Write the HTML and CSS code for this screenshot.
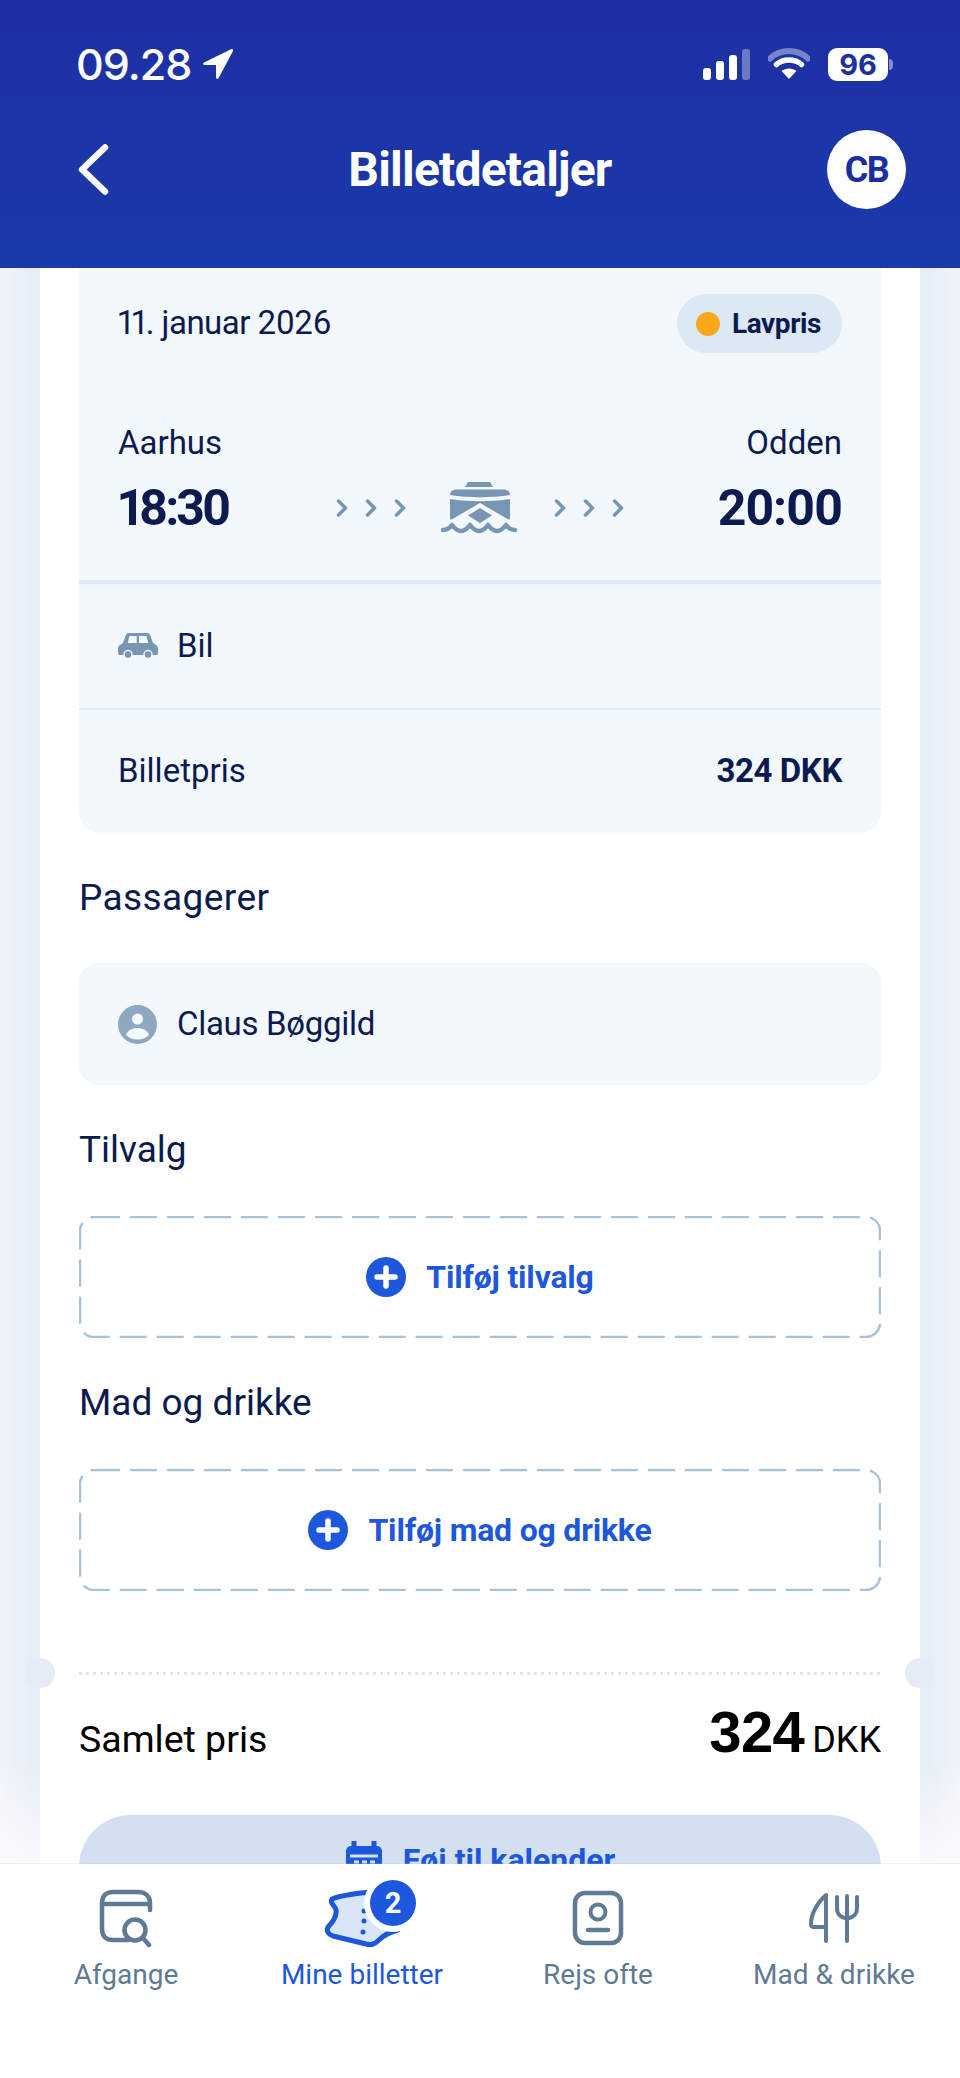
FILE: index.html
```html
<!DOCTYPE html>
<html lang="da">
<head>
<meta charset="utf-8">
<title>Billetdetaljer</title>
<link rel="stylesheet" href="styles.css">
</head>
<body>
<div class="app">
  <header class="top">
    <div class="status">
      <div class="status-left">
        <span class="clock">09.28</span>
        <svg class="loc" viewBox="0 0 32 32"><path d="M29.500 1 2 14.500C.5 15.300 1 17 2.500 17H14v12.500c0 1.600 1.900 2 2.600.6L31 3c.6-1.300-.3-2.500-1.500-2Z" fill="#fff"/></svg>
      </div>
      <div class="status-right">
        <div class="signal"><i class="b1"></i><i class="b2"></i><i class="b3"></i><i class="b4"></i></div>
        <svg class="wifi" viewBox="0 0 42 32"><path d="M2 10.500C12.500 .5 29.500 .5 40 10.500" fill="none" stroke="#fff" stroke-opacity=".4" stroke-width="6" stroke-linecap="round"/><path d="M8.500 16.500C15 10.500 27 10.500 33.500 16.500" fill="none" stroke="#fff" stroke-width="5.500" stroke-linecap="round"/><path d="M21 31 13.500 23c4-3.500 11-3.500 15 0Z" fill="#fff"/></svg>
        <div class="battery"><span>96</span></div>
      </div>
    </div>
    <div class="nav">
      <svg class="back" viewBox="0 0 31 51"><path d="M27 3.500 4 25.500 27 47.500" fill="none" stroke="#fff" stroke-width="6.500" stroke-linecap="round" stroke-linejoin="round"/></svg>
      <h1 class="title">Billetdetaljer</h1>
      <div class="avatar">CB</div>
    </div>
  </header>

  <main class="scroll">
    <div class="card">
      <section class="panel">
        <div class="panel-head">
          <div class="date-row">
            <span class="date">11. januar 2026</span>
            <span class="pill"><i class="dot"></i>Lavpris</span>
          </div>
          <div class="route">
            <div class="stop">
              <span class="city">Aarhus</span>
              <span class="time time-start">18:30</span>
            </div>
            <div class="voyage">
              <svg class="chev" viewBox="0 0 12 18"><path d="M2.500 2 9.500 9 2.500 16" /></svg>
              <svg class="chev" viewBox="0 0 12 18"><path d="M2.500 2 9.500 9 2.500 16" /></svg>
              <svg class="chev" viewBox="0 0 12 18"><path d="M2.500 2 9.500 9 2.500 16" /></svg>
              <svg class="ferry" viewBox="0 0 80 52"><path d="M28 0h22l3 5H25ZM10 13c0-3 2-5 5-5.500h50c3 .5 5 2.500 5 5.500-18 3-42 3-60 0ZM10 17c18 3 42 3 60 0v19c0 1.500-1 2-2.500 1L40 21 12.500 37C11 38 10 37.500 10 36ZM40 26l12 7.500-12 7.500-12-7.500Z" fill="#7895B3"/><path d="M3 48c4 0 6-1 9-5 3 4 5 6 9 6s6-2 9-6c3 4 5 6 9 6s6-2 9-6c3 4 5 6 9 6s6-2 9-6c3 4 5 5 9 5" fill="none" stroke="#7895B3" stroke-width="4.500" stroke-linecap="round" stroke-linejoin="round"/></svg>
              <svg class="chev" viewBox="0 0 12 18"><path d="M2.500 2 9.500 9 2.500 16" /></svg>
              <svg class="chev" viewBox="0 0 12 18"><path d="M2.500 2 9.500 9 2.500 16" /></svg>
              <svg class="chev" viewBox="0 0 12 18"><path d="M2.500 2 9.500 9 2.500 16" /></svg>
            </div>
            <div class="stop stop-end">
              <span class="city">Odden</span>
              <span class="time">20:00</span>
            </div>
          </div>
        </div>
        <div class="row row-first">
          <svg class="car" viewBox="0 0 40 26"><path fill-rule="evenodd" d="M11 0h18c2 0 3 1 3.500 3L35 10l3 2c1.500 1 2 2 2 4v4c0 1.500-1 2-2 2H2c-1 0-2-.5-2-2v-4c0-2 .5-3 2-4l3-2L7.500 3C8 1 9.500 0 11 0ZM11.500 3 9.700 10h9V3ZM21 3v7h9.300L28.500 3Z" fill="#7895B3"/><circle cx="10" cy="21.500" r="4" fill="#7895B3" stroke="#F3F8FD" stroke-width="1.500"/><circle cx="30" cy="21.500" r="4" fill="#7895B3" stroke="#F3F8FD" stroke-width="1.500"/></svg>
          <span class="row-text">Bil</span>
        </div>
        <div class="row row-price">
          <span class="row-text">Billetpris</span>
          <strong class="price">324 DKK</strong>
        </div>
      </section>

      <h2 class="heading heading-wide">Passagerer</h2>
      <section class="panel passenger">
        <svg class="person" viewBox="0 0 39 39"><circle cx="19.500" cy="19.500" r="19.500" fill="#8FA8C2"/><circle cx="19.500" cy="14" r="5.500" fill="#F3F8FD"/><path d="M8 30c2-5 6-7 11.500-7S29 25 31 30c-3 3-7 4.500-11.500 4.500S11 33 8 30Z" fill="#F3F8FD"/></svg>
        <span class="row-text">Claus Bøggild</span>
      </section>

      <h2 class="heading heading-b">Tilvalg</h2>
      <button class="add" type="button">
        <svg class="dash" viewBox="0 0 802 122" preserveAspectRatio="none"><rect x="1" y="1" width="800" height="120" rx="14" /></svg>
        <svg class="plus" viewBox="0 0 40 40"><circle cx="20" cy="20" r="20" fill="#1D57DB"/><path d="M20 11v18M11 20h18" stroke="#fff" stroke-width="5.500" stroke-linecap="round"/></svg>
        <span>Tilføj tilvalg</span>
      </button>

      <h2 class="heading heading-b">Mad og drikke</h2>
      <button class="add" type="button">
        <svg class="dash" viewBox="0 0 802 122" preserveAspectRatio="none"><rect x="1" y="1" width="800" height="120" rx="14" /></svg>
        <svg class="plus" viewBox="0 0 40 40"><circle cx="20" cy="20" r="20" fill="#1D57DB"/><path d="M20 11v18M11 20h18" stroke="#fff" stroke-width="5.500" stroke-linecap="round"/></svg>
        <span>Tilføj mad og drikke</span>
      </button>

      <div class="tear"></div>
      <div class="total">
        <span class="total-label">Samlet pris</span>
        <span class="total-value"><b>324</b> <span class="cur">DKK</span></span>
      </div>
      <button class="calendar" type="button">
        <svg class="cal" viewBox="0 0 38 38"><path d="M9 1v8M29 1v8" stroke="#1D57DB" stroke-width="5" stroke-linecap="round"/><path d="M6 5h26a5 5 0 0 1 5 5v23a5 5 0 0 1-5 5H6a5 5 0 0 1-5-5V10a5 5 0 0 1 5-5Z" fill="#1D57DB"/><path d="M5 15h28" stroke="#D3E0EF" stroke-width="3"/><path d="M9 21h5M17 21h5M25 21h5" stroke="#D3E0EF" stroke-width="3"/></svg>
        <span>Føj til kalender</span>
      </button>
    </div>
    <div class="fade"></div>
  </main>

  <nav class="tabs">
    <a class="tab">
      <span class="tab-icon">
        <svg class="ic-afgange" viewBox="0 0 56 60"><path d="M30 52H15C8 52 4 48 4 41V15C4 8 8 4 15 4h25c7 0 12 4 12 11v7M4 16h47" fill="none" stroke="#5F7A95" stroke-width="4.500" stroke-linecap="round"/><circle cx="37" cy="42" r="10.500" fill="none" stroke="#5F7A95" stroke-width="4.500"/><path d="M45 50l6 7" stroke="#5F7A95" stroke-width="4.500" stroke-linecap="round"/></svg>
      </span>
      <span class="tab-label">Afgange</span>
    </a>
    <a class="tab tab-on">
      <span class="tab-icon">
        <svg class="ic-ticket" viewBox="0 0 76 60"><path d="M8 11C18 7 30 5 60 3L74 42C66 44 60 47 55 52 50 57 47 57 42 56L9 48C4 46 2 43 4 39 8 35 13 29 12 22 11 17 5 15 8 11Z" fill="#D9E6F6" stroke="#1D57DB" stroke-width="5" stroke-linejoin="round"/><circle cx="40" cy="23" r="2.500" fill="#1D57DB"/><circle cx="40" cy="33" r="2.500" fill="#1D57DB"/><circle cx="39" cy="44" r="2.500" fill="#1D57DB"/></svg>
        <span class="badge">2</span>
      </span>
      <span class="tab-label">Mine billetter</span>
    </a>
    <a class="tab">
      <span class="tab-icon">
        <svg class="ic-rejs" viewBox="0 0 52 56"><rect x="3" y="3" width="46" height="50" rx="10" fill="none" stroke="#5F7A95" stroke-width="4.500"/><circle cx="26" cy="22" r="7.500" fill="none" stroke="#5F7A95" stroke-width="4"/><path d="M16 40h20" stroke="#5F7A95" stroke-width="4.500" stroke-linecap="round"/></svg>
      </span>
      <span class="tab-label">Rejs ofte</span>
    </a>
    <a class="tab">
      <span class="tab-icon">
        <svg class="ic-mad" viewBox="0 0 52 52"><path d="M18 49V3C9 11 3 22 3 32c0 2 1 3 3 3h12" fill="none" stroke="#5F7A95" stroke-width="4" stroke-linecap="round" stroke-linejoin="round"/><path d="M39 49V4M29 5v11c0 6 4 10 10 10s10-4 10-10V5" fill="none" stroke="#5F7A95" stroke-width="4" stroke-linecap="round"/></svg>
      </span>
      <span class="tab-label">Mad &amp; drikke</span>
    </a>
  </nav>
</div>
</body>
</html>
```

FILE: styles.css
```css
* { box-sizing: border-box; }
html, body { margin: 0; padding: 0; }
body { font-family: Roboto, "Liberation Sans", sans-serif; font-feature-settings: "pnum"; color: #0B1B50; background: #fff; }
h1, h2 { margin: 0; font-weight: 400; }
i { display: block; }

.app { width: 960px; height: 2078px; display: flex; flex-direction: column; overflow: hidden; }

/* header */
.top { height: 268px; flex: none; background: linear-gradient(#1E2FA3, #1A3AA9); color: #fff; padding: 47px 54px 0 76px; }
.status { display: flex; justify-content: space-between; align-items: center; height: 34px; }
.status-left { display: flex; align-items: center; gap: 11px; }
.clock { font-family: Inter, Roboto, sans-serif; font-size: 43px; font-weight: 500; letter-spacing: -1px; line-height: 34px; }
.loc { width: 32px; height: 32px; }
.status-right { display: flex; align-items: center; }
.signal { display: flex; align-items: flex-end; gap: 5px; height: 31px; }
.signal i { width: 8px; background: #fff; border-radius: 3px; }
.signal .b1 { height: 12px; }
.signal .b2 { height: 19px; }
.signal .b3 { height: 25px; }
.signal .b4 { height: 31px; opacity: .35; }
.wifi { width: 42px; height: 32px; margin: 0 18px; }
.battery { position: relative; width: 60px; height: 33px; border-radius: 9px; background: #fff; color: #1B2F9F; font-family: Inter, sans-serif; font-size: 29px; font-weight: 700; line-height: 33px; text-align: center; margin-right: 18px; }
.battery::after { content: ""; position: absolute; right: -5px; top: 11px; width: 4px; height: 11px; border-radius: 0 4px 4px 0; background: rgba(255,255,255,.45); }

.nav { display: flex; align-items: center; justify-content: space-between; height: 79px; margin-top: 49px; position: relative; padding-left: 2px; }
.back { width: 31px; height: 51px; }
.title { position: absolute; left: 0; right: 22px; text-align: center; font-size: 48px; font-weight: 700; line-height: 60px; letter-spacing: -.8px; }
.avatar { width: 79px; height: 79px; border-radius: 50%; background: #fff; color: #1B2F9F; font-size: 36px; font-weight: 700; letter-spacing: -1.500px; display: flex; align-items: center; justify-content: center; }

/* scroll area */
.scroll { flex: 1; min-height: 0; position: relative; overflow: hidden; background: linear-gradient(90deg, #F0F4FA 0, #E8EEF7 30px, #E8EEF7 930px, #F0F4FA 100%); padding: 0 40px; }
.card { background: #fff; padding: 0 39px; height: 1720px; }
.fade { position: absolute; left: 0; right: 0; bottom: 0; height: 100px; background: linear-gradient(rgba(255,255,255,0), rgba(255,255,255,.7)); }

.panel { background: #F3F8FD; border-radius: 0 0 20px 20px; }
.panel-head { padding: 26px 39px 42px; border-bottom: 4px solid #DDE9F5; }
.date-row { display: flex; justify-content: space-between; align-items: center; height: 59px; }
.date { font-size: 33px; letter-spacing: -.5px; padding-bottom: 2px; }
.pill { display: flex; align-items: center; gap: 12px; height: 59px; padding: 0 21px 0 19px; border-radius: 30px; background: #DCE8F4; font-size: 28px; font-weight: 700; letter-spacing: -.4px; }
.dot { width: 24px; height: 24px; border-radius: 50%; background: #FBA71B; }

.route { display: grid; grid-template-columns: 1fr auto 1fr; margin-top: 68px; }
.stop { display: flex; flex-direction: column; }
.stop-end { align-items: flex-end; }
.city { font-size: 33px; line-height: 44px; }
.time { font-size: 50px; font-weight: 700; line-height: 60px; margin-top: 13px; letter-spacing: -1.500px; }
.time-start { letter-spacing: -3.200px; }
.voyage { display: flex; align-items: center; gap: 17px; padding-top: 57px; }
.chev { width: 12px; height: 18px; fill: none; stroke: #7895B3; stroke-width: 3.500; stroke-linecap: round; stroke-linejoin: round; }
.ferry { width: 80px; height: 52px; margin: 0 17px; }

.row { display: flex; align-items: center; padding: 0 39px; }
.row-first { height: 126px; gap: 19px; border-bottom: 2px solid #DDE9F5; }
.row-price { height: 123px; justify-content: space-between; }
.row-text { font-size: 33px; padding-bottom: 2px; }
.car { width: 40px; height: 26px; }
.price { font-size: 33px; font-weight: 700; letter-spacing: -.4px; padding-bottom: 2px; }

.heading { display: flex; align-items: center; height: 130px; padding-bottom: 2px; font-size: 37px; }
.heading-wide { letter-spacing: .4px; }
.heading-b { height: 131px; }
.passenger { height: 122px; border-radius: 20px; display: flex; align-items: center; gap: 20px; padding: 0 39px; }
.passenger .row-text { letter-spacing: -.3px; }
.person { width: 39px; height: 39px; }

.add { position: relative; display: flex; align-items: center; justify-content: center; gap: 20px; width: 100%; height: 122px; border: 0; padding: 0; background: none; font-family: inherit; font-size: 32px; font-weight: 700; letter-spacing: -.2px; color: #1D57DB; }
.dash { position: absolute; inset: 0; width: 100%; height: 100%; fill: none; stroke: #A9C2DC; stroke-width: 2.500; stroke-dasharray: 25 12; stroke-linecap: round; }
.plus { width: 40px; height: 40px; position: relative; }
.add span { position: relative; }

.tear { position: relative; height: 3px; margin-top: 81px; background: radial-gradient(circle at 1.500px 1.500px, #DDE5EE 1.500px, transparent 2px) 0 0 / 7px 3px repeat-x; }
.tear::before, .tear::after { content: ""; position: absolute; top: -14px; width: 30px; height: 30px; border-radius: 50%; background: #E6ECF5; }
.tear::before { left: -54px; }
.tear::after { right: -54px; }

.total { display: flex; justify-content: space-between; align-items: baseline; height: 126px; padding-top: 23px; margin-bottom: 14px; }
.total-label { font-size: 37.500px; color: #000; }
.total-value { color: #000; }
.total-value b { font-family: "Liberation Sans", sans-serif; font-size: 58px; letter-spacing: -.6px; margin-right: 2px; }
.cur { font-size: 36px; margin-left: 2px; }

.calendar { position: relative; z-index: 1; display: flex; align-items: center; justify-content: center; gap: 20px; width: 100%; height: 104px; border: 0; border-radius: 52px; background: #D3E0EF; padding: 0 0 14px; font-family: inherit; font-size: 32px; font-weight: 700; color: #1D57DB; }
.cal { width: 38px; height: 38px; }

/* tab bar */
.tabs { height: 214px; flex: none; background: #fff; display: grid; grid-template-columns: repeat(4, 1fr); padding: 24px 8px 0; position: relative; z-index: 2; box-shadow: 0 -1px 0 rgba(180,195,215,.2); }
.tab { display: flex; flex-direction: column; align-items: center; color: #5F7A95; }
.tab-on { color: #1D57DB; }
.tab-icon { position: relative; display: flex; align-items: center; justify-content: center; height: 60px; }
.tab-label { font-size: 28px; line-height: 44px; margin-top: 5px; white-space: nowrap; }
.ic-afgange { width: 56px; height: 60px; }
.ic-ticket { width: 76px; height: 60px; }
.ic-rejs { width: 52px; height: 56px; }
.ic-mad { width: 52px; height: 52px; }
.badge { position: absolute; right: -16px; top: -8px; width: 46px; height: 46px; border-radius: 50%; background: #1D57DB; color: #fff; box-shadow: 0 0 0 6px #fff; font-size: 29px; font-weight: 700; display: flex; align-items: center; justify-content: center; }
```
